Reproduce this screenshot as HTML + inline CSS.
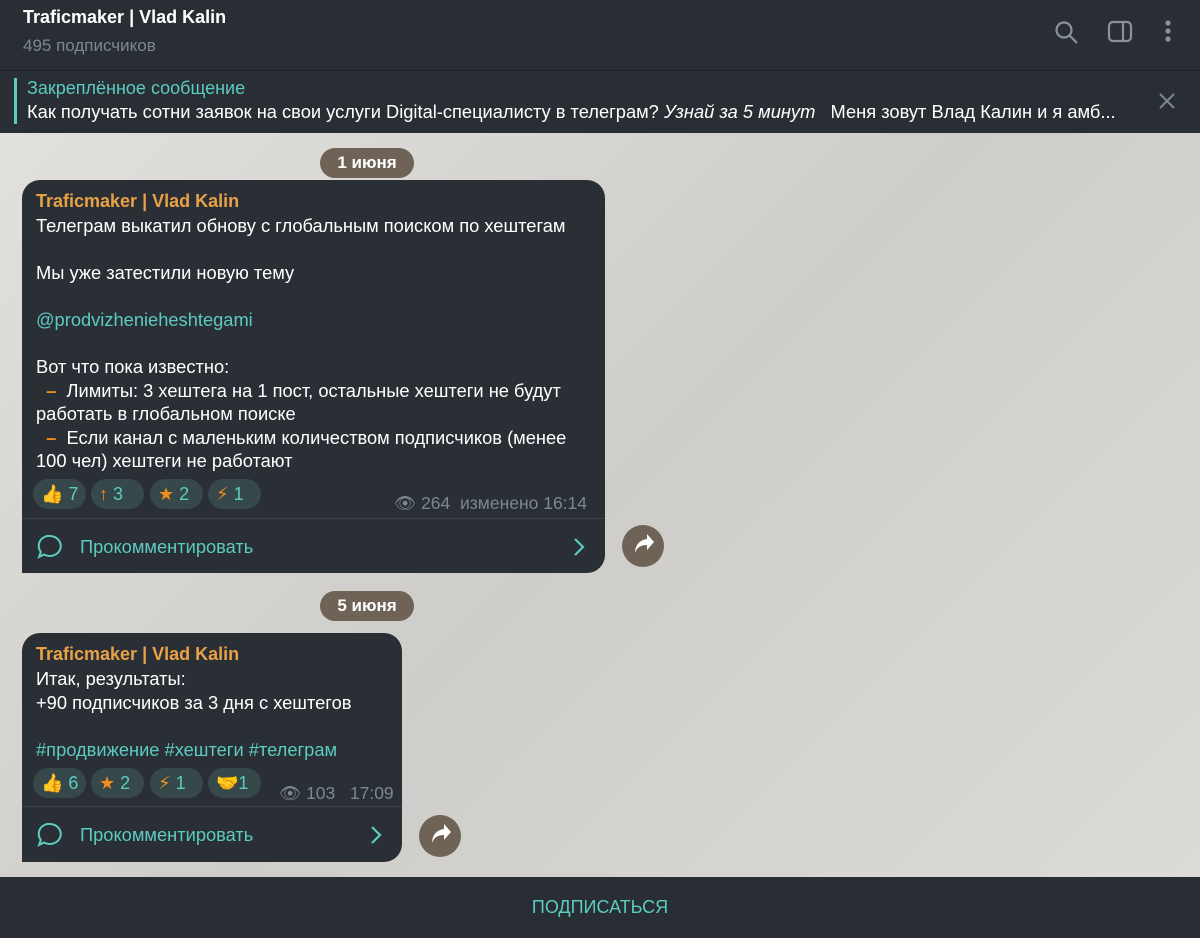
<!DOCTYPE html>
<html><head><meta charset="utf-8"><style>
*{margin:0;padding:0;box-sizing:border-box}
body{width:1200px;height:938px;overflow:hidden;font-family:"Liberation Sans","DejaVu Sans",sans-serif;background:#d9d7d3;position:relative}
.hdr{position:absolute;left:0;top:0;width:1200px;height:70px;background:#282e33}
.hdr .t{position:absolute;left:23px;top:7px;color:#fff;font-size:18px;font-weight:bold}
.hdr .s{position:absolute;left:23px;top:36px;color:#7d8790;font-size:17px}
.pin{position:absolute;left:0;top:70px;width:1200px;height:63px;background:#282e33;border-top:1px solid #1f2428}
.pin .bar{position:absolute;left:14px;top:7px;width:3px;height:46px;background:#5ccbc0}
.pin .a{position:absolute;left:27px;top:7px;color:#5ccbc0;font-size:18px}
.pin .b{position:absolute;left:27px;top:30px;color:#fff;font-size:18.3px;white-space:nowrap}
.bg{position:absolute;left:0;top:133px;width:1200px;height:744px;background:linear-gradient(135deg,#e2e0dd,#cfcdca 50%,#dddbd8)}
.date{position:absolute;height:30px;border-radius:15px;background:#6e6356;color:#fff;font-size:17px;font-weight:bold;line-height:30px;text-align:center}
.msg{position:absolute;background:#2a2f35;border-radius:18px;border-bottom-left-radius:0;color:#fff;font-size:18.3px;line-height:23.5px}
.msg .n{color:#e9a147;font-weight:bold;position:absolute;left:14px;top:10px;font-size:18px}
.msg .tx{position:absolute;left:14px;top:34px;white-space:nowrap}
.link{color:#5ccbc0}
.re{position:absolute;height:30px;border-radius:15px;background:#37484a;color:#5ccbc0;font-size:18px;line-height:30px;padding-left:8px}
.re b{color:#f28c1c;font-weight:normal}
.meta{position:absolute;color:#7d8790;font-size:17.5px;white-space:nowrap}
.sep{position:absolute;left:0;height:1px;background:#3d434a}
.cm{position:absolute;left:58px;color:#5ccbc0;font-size:18.3px}
.fw{position:absolute;width:42px;height:42px;border-radius:50%;background:#6e6356}
.foot{position:absolute;left:0;top:877px;width:1200px;height:61px;background:#282e33;color:#5ccbc0;text-align:center;line-height:61px;font-size:18px}
</style></head><body>
<div class="hdr"><div class="t">Traficmaker | Vlad Kalin</div><div class="s">495 подписчиков</div>
<svg style="position:absolute;left:1054px;top:20px" width="26" height="26" fill="none" stroke="#8a9198" stroke-width="2.2"><circle cx="10" cy="10" r="7.5"/><path d="M15.5 15.5L23 23"/></svg>
<svg style="position:absolute;left:1107px;top:20px" width="28" height="24" fill="none" stroke="#8a9198" stroke-width="2.2"><rect x="2" y="2" width="22" height="19" rx="4"/><path d="M16 2v19"/></svg>
<svg style="position:absolute;left:1163px;top:19px" width="10" height="26" fill="#8a9198"><circle cx="5" cy="4" r="2.6"/><circle cx="5" cy="12" r="2.6"/><circle cx="5" cy="20" r="2.6"/></svg>
</div>
<div class="pin"><div class="bar"></div><div class="a">Закреплённое сообщение</div><div class="b">Как получать сотни заявок на свои услуги Digital-специалисту в телеграм? <i>Узнай за 5 минут</i>&nbsp;&nbsp; Меня зовут Влад Калин и я амб...</div>
<svg style="position:absolute;left:1158px;top:21px" width="18" height="18" stroke="#7d8790" stroke-width="2"><path d="M2 2L16 16M16 2L2 16"/></svg></div>
<div class="bg"></div>
<div class="date" style="left:320px;top:148px;width:94px">1 июня</div>
<div class="msg" style="left:22px;top:180px;width:583px;height:393px">
<div class="n">Traficmaker | Vlad Kalin</div>
<div class="tx">Телеграм выкатил обнову с глобальным поиском по хештегам<br><br>Мы уже затестили новую тему<br><br><span class="link">@prodvizhenieheshtegami</span><br><br>Вот что пока известно:<br>&nbsp;&nbsp;<b style="color:#f28c1c">–</b>&nbsp; Лимиты: 3 хештега на 1 пост, остальные хештеги не будут<br>работать в глобальном поиске<br>&nbsp;&nbsp;<b style="color:#f28c1c">–</b>&nbsp; Если канал с маленьким количеством подписчиков (менее<br>100 чел) хештеги не работают</div>
<div class="re" style="left:11px;top:299px;width:53px"><b>👍</b> 7</div>
<div class="re" style="left:69px;top:299px;width:53px"><b>↑</b> 3</div>
<div class="re" style="left:128px;top:299px;width:53px"><b>★</b> 2</div>
<div class="re" style="left:186px;top:299px;width:53px"><b>⚡</b> 1</div>
<div class="meta" style="left:372px;top:312px">👁 264&nbsp; изменено 16:14</div>
<div class="sep" style="top:338px;width:583px"></div>
<svg style="position:absolute;left:14px;top:353px" width="28" height="28" fill="none" stroke="#5ccbc0" stroke-width="2"><path d="M14 3a11 10 0 1 1-6 18.5L3 24l1.8-5A10 10 0 0 1 14 3z"/></svg>
<div class="cm" style="top:355px">Прокомментировать</div>
<svg style="position:absolute;left:550px;top:357px" width="14" height="20" fill="none" stroke="#5ccbc0" stroke-width="2.2"><path d="M3 2l8 8-8 8"/></svg>
</div>
<div class="fw" style="left:622px;top:525px"><svg width="42" height="42"><path d="M13 28c2-6 6-8 12-8v5l7-8-7-8v5c-8 1-12 7-12 14z" fill="#fff"/></svg></div>
<div class="date" style="left:320px;top:591px;width:94px">5 июня</div>
<div class="msg" style="left:22px;top:633px;width:380px;height:229px">
<div class="n">Traficmaker | Vlad Kalin</div>
<div class="tx">Итак, результаты:<br>+90 подписчиков за 3 дня с хештегов<br><br><span class="link">#продвижение #хештеги #телеграм</span></div>
<div class="re" style="left:11px;top:135px;width:53px"><b>👍</b> 6</div>
<div class="re" style="left:69px;top:135px;width:53px"><b>★</b> 2</div>
<div class="re" style="left:128px;top:135px;width:53px"><b>⚡</b> 1</div>
<div class="re" style="left:186px;top:135px;width:53px"><b>🤝</b>1</div>
<div class="meta" style="left:257px;top:149px">👁 103&nbsp;&nbsp; 17:09</div>
<div class="sep" style="top:173px;width:380px"></div>
<svg style="position:absolute;left:14px;top:188px" width="28" height="28" fill="none" stroke="#5ccbc0" stroke-width="2"><path d="M14 3a11 10 0 1 1-6 18.5L3 24l1.8-5A10 10 0 0 1 14 3z"/></svg>
<div class="cm" style="top:190px">Прокомментировать</div>
<svg style="position:absolute;left:347px;top:192px" width="14" height="20" fill="none" stroke="#5ccbc0" stroke-width="2.2"><path d="M3 2l8 8-8 8"/></svg>
</div>
<div class="fw" style="left:419px;top:815px"><svg width="42" height="42"><path d="M13 28c2-6 6-8 12-8v5l7-8-7-8v5c-8 1-12 7-12 14z" fill="#fff"/></svg></div>
<div class="foot">ПОДПИСАТЬСЯ</div>
</body></html>
